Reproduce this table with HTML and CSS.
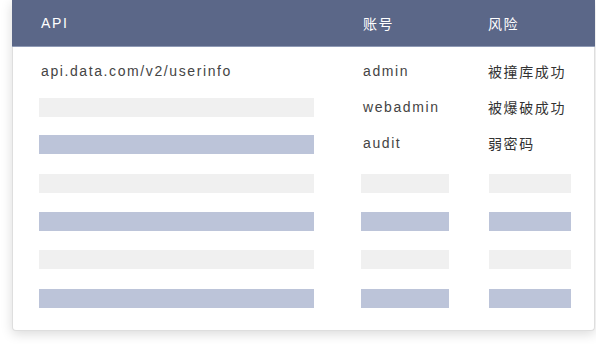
FILE: index.html
```html
<!DOCTYPE html>
<html lang="zh">
<head>
<meta charset="utf-8">
<link rel="stylesheet" href="styles.css">
</head>
<body>
<div class="card">
  <div class="head row">
    <div class="c1">API</div>
    <div class="c2">账号</div>
    <div class="c3">风险</div>
  </div>
  <div class="body">
    <div class="row r1">
      <div class="c1 txt">api.data.com/v2/userinfo</div>
      <div class="c2 txt">admin</div>
      <div class="c3 txt">被撞库成功</div>
    </div>
    <div class="row r2">
      <div class="c1"><span class="bar gray"></span></div>
      <div class="c2 txt">webadmin</div>
      <div class="c3 txt">被爆破成功</div>
    </div>
    <div class="row r3">
      <div class="c1"><span class="bar blue"></span></div>
      <div class="c2 txt">audit</div>
      <div class="c3 txt">弱密码</div>
    </div>
    <div class="row">
      <div class="c1"><span class="bar gray"></span></div>
      <div class="c2"><span class="bar gray"></span></div>
      <div class="c3"><span class="bar gray"></span></div>
    </div>
    <div class="row">
      <div class="c1"><span class="bar blue"></span></div>
      <div class="c2"><span class="bar blue"></span></div>
      <div class="c3"><span class="bar blue"></span></div>
    </div>
    <div class="row">
      <div class="c1"><span class="bar gray"></span></div>
      <div class="c2"><span class="bar gray"></span></div>
      <div class="c3"><span class="bar gray"></span></div>
    </div>
    <div class="row">
      <div class="c1"><span class="bar blue"></span></div>
      <div class="c2"><span class="bar blue"></span></div>
      <div class="c3"><span class="bar blue"></span></div>
    </div>
  </div>
</div>
</body>
</html>
```

FILE: styles.css
```css
html, body {
  margin: 0;
  padding: 0;
  background: #ffffff;
}
body {
  width: 596px;
  height: 344px;
  overflow: hidden;
  font-family: "Liberation Sans", "Noto Sans CJK SC", sans-serif;
  font-size: 14px;
  letter-spacing: 1.6px;
}
.card {
  margin-left: 12px;
  width: 581px;
  height: 330px;
  background: #ffffff;
  border: 1px solid #dedede;
  border-top: none;
  border-radius: 0 0 4px 4px;
  box-shadow: 0 3px 12px rgba(0, 0, 0, 0.15);
  display: flex;
  flex-direction: column;
}
.row {
  display: grid;
  grid-template-columns: 322px 128px 82px;
  align-items: center;
  padding-left: 26px;
}
.c1 .bar { width: 275px; }
.c2 .bar { width: 88px; }
.c3 .bar { width: 82px; }
.head {
  height: 46px;
  background: #5b6788;
  border-bottom: 1px solid #8f9ab5;
  color: #ffffff;
  margin: 0 -1px;
  padding-left: 27px;
}
.head .c1, .head .c2 {
  padding-left: 2px;
}
.head .c3 {
  margin-left: -1px;
}
.body {
  padding-top: 6px;
  display: flex;
  flex-direction: column;
}
.body .row { height: 38.4px; }
.body .row.r1 { height: 36px; }
.body .row.r2 { height: 36.5px; }
.row.r3 .txt { margin-top: -3px; }
.txt {
  color: #444444;
  padding-left: 2px;
  white-space: nowrap;
}
.c3.txt {
  padding-left: 0;
  margin-left: -1px;
  color: #333333;
}
.bar {
  display: block;
  height: 19px;
}
.gray { background: #f0f0f0; }
.blue { background: #bcc4d9; }
```
